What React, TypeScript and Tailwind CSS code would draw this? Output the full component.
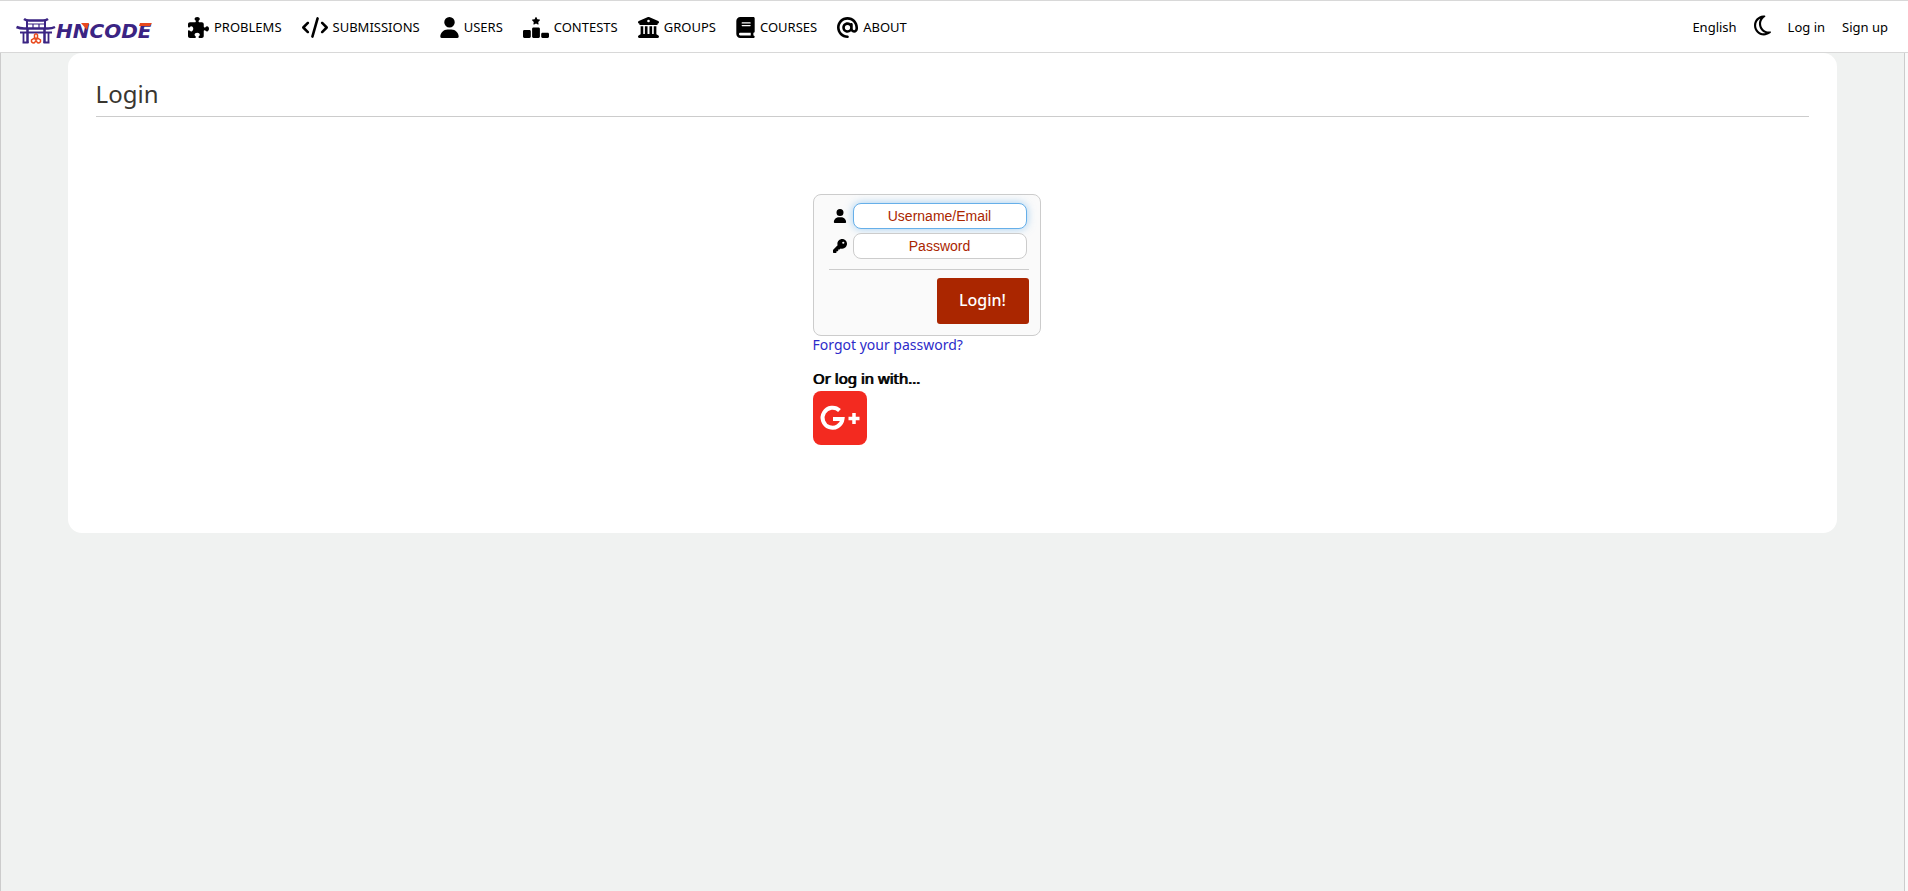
import type { ReactNode } from "react";
import {
  FaAt,
  FaBook,
  FaBuildingColumns,
  FaCode,
  FaKey,
  FaPuzzlePiece,
  FaRankingStar,
  FaRegMoon,
  FaUser,
} from "react-icons/fa6";

const NAV: { label: string; href: string; icon: ReactNode }[] = [
  { label: "PROBLEMS", href: "/problems/", icon: <FaPuzzlePiece className="h-[21px] w-[21px]" /> },
  { label: "SUBMISSIONS", href: "/submissions/", icon: <FaCode className="h-[21px] w-[26px]" /> },
  { label: "USERS", href: "/users/", icon: <FaUser className="h-[21px] w-[19px]" /> },
  { label: "CONTESTS", href: "/contests/", icon: <FaRankingStar className="h-[21px] w-[26px]" /> },
  { label: "GROUPS", href: "/organizations/", icon: <FaBuildingColumns className="h-[21px] w-[21px]" /> },
  { label: "COURSES", href: "/courses/", icon: <FaBook className="h-[21px] w-[19px]" /> },
  { label: "ABOUT", href: "/about/", icon: <FaAt className="h-[21px] w-[21px]" /> },
];

function Logo() {
  return (
    <svg viewBox="0 0 140 30" className="h-[30px] w-[140px]" role="img" aria-label="HNCODE">
      {/* gate */}
      <g fill="none" stroke="#3b2483">
        <path d="M8 3 Q10 4.500 13 4.500 H27 Q30 4.500 32 3" strokeWidth="2.500" />
        <path d="M11 5 V12 M29 5 V12" strokeWidth="2" />
        <path d="M11 8 H29 M17 8 V12 M23 8 V12" strokeWidth="1.200" />
        <path d="M0.500 11 Q4 12.500 8 12.500 H32 Q36 12.500 39 11" strokeWidth="2.500" />
        <path d="M4 16.500 H36" strokeWidth="2" />
        <path d="M11.500 13 V27 M28.500 13 V27" strokeWidth="2.500" />
        <path d="M7.500 17 V27 M32.500 17 V27 M6.500 26.500 H12.500 M27.500 26.500 H33.500" strokeWidth="1.800" />
      </g>
      <g fill="none" stroke="#e8491d" strokeWidth="1.500">
        <path d="M18.500 22 V19 Q20 16.500 21.500 19 V22 L24.500 24 Q25 27 22 27 L20 25 L18 27 Q15 27 15.500 24 Z" />
        <circle cx="20" cy="23" r="1" />
      </g>
      {/* wordmark */}
      <text
        x="40"
        y="22"
        fill="#3b2483"
        className="font-['DejaVu_Sans',sans-serif] text-[20px] font-bold italic"
      >
        HNCODE
      </text>
      <path d="M65 7 H73 L71 14 Z" fill="#e8491d" />
      <path d="M123 10 L124 7 H136 L134 10 Z" fill="#e8491d" />
    </svg>
  );
}

function Header() {
  return (
    <header className="flex h-[53px] items-center border-y border-[#d8d8d8] bg-white pt-px pr-5 pl-4 text-[13px] text-black">
      <a href="/" className="mt-2">
        <Logo />
      </a>
      <nav className="ml-8 flex items-center gap-5 pt-px">
        {NAV.map((item) => (
          <a key={item.label} href={item.href} className="flex items-center gap-[5px]">
            {item.icon}
            {item.label}
          </a>
        ))}
      </nav>
      <div className="ml-auto flex items-center gap-[17px] pt-px">
        <button type="button">English</button>
        <button type="button" aria-label="Toggle dark mode" className="mb-1">
          <FaRegMoon className="h-[23px] w-[17px]" />
        </button>
        <a href="/accounts/login/">Log in</a>
        <a href="/accounts/register/">Sign up</a>
      </div>
    </header>
  );
}

const inputClass =
  "h-[26px] w-[174px] rounded-lg border bg-white text-center font-['Liberation_Sans',sans-serif] text-[14px] text-[#aa2600] placeholder:text-[#aa2600] outline-none";

function LoginForm() {
  return (
    <form
      className="w-[228px] rounded-lg border border-[#ccc] bg-[#fafafa] pt-2 pr-[11px] pb-[11px] pl-[15px]"
      onSubmit={(e) => e.preventDefault()}
    >
      <div className="flex flex-col gap-1">
        <div className="flex items-center justify-between pr-[2px] pl-1">
          <label htmlFor="id_username" aria-label="Username/Email">
            <FaUser className="size-[14px]" />
          </label>
          <input
            id="id_username"
            name="username"
            placeholder="Username/Email"
            className={`${inputClass} border-[#66afe9] shadow-[0_0_8px_rgba(102,175,233,0.6)]`}
          />
        </div>
        <div className="flex items-center justify-between pr-[2px] pl-1">
          <label htmlFor="id_password" aria-label="Password">
            <FaKey className="size-[14px]" />
          </label>
          <input
            id="id_password"
            name="password"
            type="password"
            placeholder="Password"
            className={`${inputClass} border-[#ccc]`}
          />
        </div>
      </div>
      <hr className="mt-[10px] mb-2 border-[#ccc]" />
      <button
        type="submit"
        className="ml-auto block h-[46px] w-[92px] rounded-[3px] bg-[#aa2600] pb-[2px] text-[16px] font-medium text-white"
      >
        Login!
      </button>
    </form>
  );
}

export default function App() {
  return (
    <div className="flex min-h-screen flex-col bg-[#fafafa] font-['Noto_Sans',sans-serif]">
      <Header />
      <main className="mr-[3px] flex-1 border-x border-[#ccc] bg-[#f0f2f1]">
        <section className="mx-auto w-[93%] rounded-[14px] bg-white px-7 pt-6 pb-[88px]">
          <h2 className="border-b border-[#ccc] pb-[6px] text-[24px] leading-[33px] text-[#393630]">Login</h2>
          <div className="mx-auto mt-[77px] w-[280px]">
            <LoginForm />
            <a href="/accounts/password/reset/" className="block text-[14px] leading-[18px] text-[#2d2bc9]">
              Forgot your password?
            </a>
            <h4 className="mt-3 mb-px text-[15px] leading-6 text-black [text-shadow:1px_0_0_#000]">
              Or log in with...
            </h4>
            <a href="/login/google-oauth2/" aria-label="Google" className="block size-[54px]">
              <svg viewBox="0 0 54 54" className="size-[54px]">
                <rect width="54" height="54" rx="8" fill="#f32a20" />
                <path
                  d="M26.500 19.500 A10 10 0 1 0 29.500 28 H20"
                  fill="none"
                  stroke="#fff"
                  strokeWidth="4"
                />
                <path d="M41 22 V33 M35.500 27.500 H46.500" stroke="#fff" strokeWidth="3.500" />
              </svg>
            </a>
          </div>
        </section>
      </main>
    </div>
  );
}
